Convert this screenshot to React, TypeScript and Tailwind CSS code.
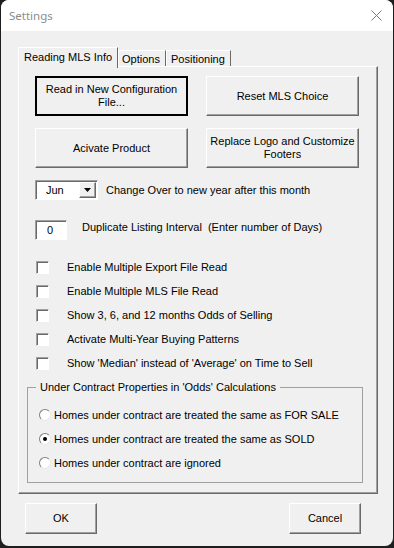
import type { ReactNode } from 'react';

const raised =
  'border border-t-white border-l-white border-r-[#696969] border-b-[#696969] shadow-[inset_-1px_-1px_0_#a0a0a0]';
const sunken =
  'bg-white border border-t-[#a0a0a0] border-l-[#a0a0a0] border-r-white border-b-white shadow-[inset_1px_1px_0_#696969]';

function Button({ children, focused, className = '' }: { children: ReactNode; focused?: boolean; className?: string }) {
  const edge = focused ? 'border-2 border-black' : raised;
  return (
    <div className={`${edge} ${className} flex items-center justify-center text-center leading-[13px] bg-[#f0f0f0]`}>
      {children}
    </div>
  );
}

function Checkbox({ label }: { label: string }) {
  return (
    <div className="flex h-[24px] items-center">
      <div className={`${sunken} ml-px h-[13px] w-[13px] shrink-0`} />
      <span className="ml-[18px] whitespace-nowrap">{label}</span>
    </div>
  );
}

function Radio({ label, checked }: { label: string; checked?: boolean }) {
  return (
    <div className="flex h-[24px] items-center">
      <div
        className={`ml-[11px] flex h-[12px] w-[12px] shrink-0 items-center justify-center rounded-full bg-white border border-t-[#808080] border-l-[#808080] border-r-[#e8e8e8] border-b-[#e8e8e8]`}
      >
        {checked && <div className="h-[4px] w-[4px] rounded-full bg-black" />}
      </div>
      <span className="ml-[3px] whitespace-nowrap">{label}</span>
    </div>
  );
}

export default function App() {
  return (
    <div className="h-[548px] w-[394px] bg-[#1e1e1e] font-['Liberation_Sans',Arial,sans-serif] text-[11px] text-black">
      <div className="ml-px flex h-[546px] w-[392px] flex-col overflow-hidden rounded-[8px] bg-[#f0f0f0]">
        {/* title bar */}
        <div className="flex h-[31px] shrink-0 items-center justify-between bg-white pl-[8px] pr-[11px]">
          <span className="font-['Noto_Sans',sans-serif] text-[11.5px] text-[#8c8c8c]">Settings</span>
          <svg width="11" height="11" viewBox="0 0 11 11" className="mb-px">
            <path d="M0.5 0.5 L10.5 10.5 M10.5 0.5 L0.5 10.5" stroke="#7a7a7a" strokeWidth="1" />
          </svg>
        </div>

        {/* tabs */}
        <div className="relative z-10 ml-[17px] mt-[16px] flex h-[19px] items-end">
          <div className={`-mb-[2px] h-[21px] w-[100px] bg-[#f0f0f0] border-t border-l border-r border-t-white border-l-white border-r-[#696969] pl-[5px] pt-[2px] leading-[14px]`}>
            Reading MLS Info
          </div>
          <div className="h-[16px] w-[48px] border-t border-l border-r border-t-white border-l-white border-r-[#696969] pl-[3px] pt-px leading-[14px]">
            Options
          </div>
          <div className="h-[16px] w-[65px] border-t border-l border-r border-t-white border-l-white border-r-[#696969] pl-[4px] pt-px leading-[14px]">
            Positioning
          </div>
        </div>

        {/* tab panel */}
        <div className={`${raised} ml-[17px] h-[428px] w-[360px] shrink-0 pl-[16px] pt-[9px]`}>
          <div className="flex gap-[18px]">
            <Button focused className="h-[40px] w-[153px]">
              Read in New Configuration
              <br />
              File...
            </Button>
            <Button className="h-[40px] w-[153px]">Reset MLS Choice</Button>
          </div>
          <div className="mt-[12px] flex gap-[18px]">
            <Button className="h-[40px] w-[153px]">Acivate Product</Button>
            <Button className="h-[40px] w-[153px]">
              Replace Logo and Customize
              <br />
              Footers
            </Button>
          </div>

          <div className="mt-[12px] flex h-[20px] items-center">
            <div className={`${sunken} flex h-[20px] w-[63px] items-center`}>
              <span className="flex-1 pl-[10px]">Jun</span>
              <div className={`${raised} mr-px flex h-[16px] w-[17px] items-center justify-center bg-[#f0f0f0]`}>
                <svg width="7" height="4" viewBox="0 0 7 4">
                  <path d="M0 0 H7 L3.5 4 Z" fill="#000" />
                </svg>
              </div>
            </div>
            <span className="ml-[8px] whitespace-nowrap">Change Over to new year after this month</span>
          </div>

          <div className="mt-[20px] flex items-start">
            <div className={`${sunken} flex h-[20px] w-[32px] items-center pl-[11px]`}>0</div>
            <span className="ml-[15px] whitespace-pre leading-[14px]">
              Duplicate Listing Interval  (Enter number of Days)
            </span>
          </div>

          <div className="mt-[15px]">
            <Checkbox label="Enable Multiple Export File Read" />
            <Checkbox label="Enable Multiple MLS File Read" />
            <Checkbox label="Show 3, 6, and 12 months Odds of Selling" />
            <Checkbox label="Activate Multi-Year Buying Patterns" />
            <Checkbox label="Show 'Median' instead of 'Average' on Time to Sell" />
          </div>

          <fieldset className="-ml-[8px] mt-[5px] h-[103px] w-[336px] border border-[#a0a0a0]">
            <legend className="ml-[8px] px-[4px] leading-[14px]">Under Contract Properties in 'Odds' Calculations</legend>
            <div className="mt-[9px]">
              <Radio label="Homes under contract are treated the same as FOR SALE" />
              <Radio checked label="Homes under contract are treated the same as SOLD" />
              <Radio label="Homes under contract are ignored" />
            </div>
          </fieldset>
        </div>

        {/* dialog buttons */}
        <div className="ml-[24px] mt-[9px] flex w-[336px] justify-between">
          <Button className="h-[31px] w-[72px]">OK</Button>
          <Button className="h-[31px] w-[72px]">Cancel</Button>
        </div>
      </div>
    </div>
  );
}
